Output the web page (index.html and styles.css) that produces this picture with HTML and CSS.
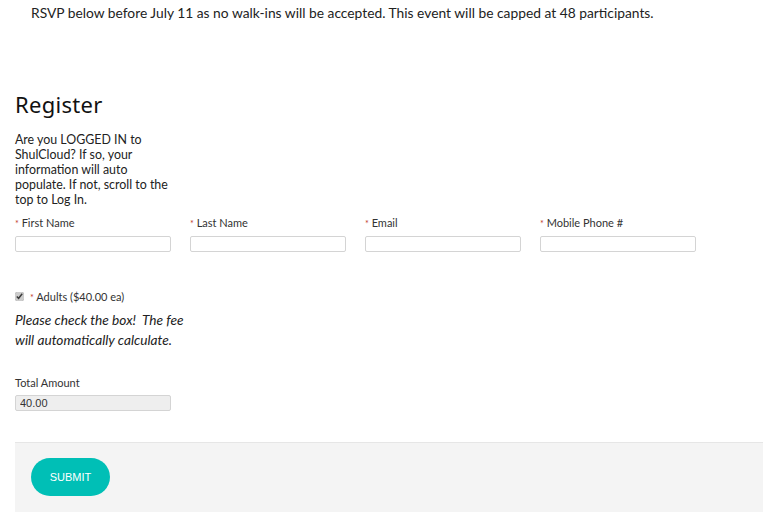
FILE: index.html
```html
<!DOCTYPE html>
<html>
<head>
  <meta charset="utf-8">
  <title>Register</title>
  <link rel="stylesheet" href="styles.css">
</head>
<body>
  <p class="intro">RSVP below before July 11 as no walk-ins will be accepted. This event will be capped at 48 participants.</p>

  <form class="reg-form">
    <h2 class="reg-title">Register</h2>
    <p class="reg-note">Are you LOGGED IN to ShulCloud? If so, your information will auto populate. If not, scroll to the top to Log In.</p>

    <div class="field-row">
      <div class="field">
        <label><span class="req">*</span> First Name</label>
        <input type="text" name="first_name">
      </div>
      <div class="field">
        <label><span class="req">*</span> Last Name</label>
        <input type="text" name="last_name">
      </div>
      <div class="field">
        <label><span class="req">*</span> Email</label>
        <input type="text" name="email">
      </div>
      <div class="field">
        <label><span class="req">*</span> Mobile Phone #</label>
        <input type="text" name="phone">
      </div>
    </div>

    <div class="check-row">
      <input type="checkbox" id="adults" checked>
      <label for="adults"><span class="req">*</span> Adults ($40.00 ea)</label>
    </div>
    <p class="check-note">Please check the box!&nbsp; The fee will automatically calculate.</p>

    <div class="field total">
      <label>Total Amount</label>
      <input type="text" value="40.00" readonly>
    </div>

    <div class="form-footer">
      <button type="submit">SUBMIT</button>
    </div>
  </form>
</body>
</html>
```

FILE: styles.css
```css
body {
  font-family: Lato, "Liberation Sans", sans-serif;
  color: #222;
  margin: 0;
  padding: 0 9px 0 15px;
}

.intro {
  font-size: 13.8px;
  line-height: 20px;
  margin: 3px 0 0 16px;
  color: #222;
}

.reg-title {
  font-family: "Noto Sans", "Open Sans", sans-serif;
  font-weight: 400;
  font-size: 22px;
  letter-spacing: 0.3px;
  color: #111;
  margin: 66px 0 0;
  line-height: 30px;
}

.reg-note {
  font-size: 12.4px;
  line-height: 15px;
  width: 158px;
  margin: 13px 0 0;
}

.field-row {
  display: flex;
  gap: 19px;
  margin-top: 9px;
}

.field {
  width: 156px;
}

.field label {
  display: block;
  font-size: 11px;
  line-height: 14px;
  color: #333;
  margin-bottom: 5px;
}

.req {
  color: #c0392b;
  font-size: 9px;
}

.field input {
  display: block;
  box-sizing: border-box;
  width: 156px;
  height: 16px;
  border: 1px solid #d4d4d4;
  border-radius: 2px;
  padding: 0 4px;
  font-family: "Liberation Sans", Arial, sans-serif;
  font-size: 11px;
  background: #fff;
}

.check-row {
  display: flex;
  align-items: center;
  margin-top: 38px;
  font-size: 11px;
  color: #333;
}

.check-row input {
  width: 9px;
  height: 9px;
  margin: 0 6px 0 0;
  accent-color: #ccc;
}

.check-note {
  font-style: italic;
  font-size: 13.7px;
  line-height: 20px;
  width: 175px;
  margin: 7px 0 0;
  color: #222;
}

.total {
  margin-top: 26px;
}

.total input {
  background: #eee;
  color: #333;
}

.form-footer {
  margin-top: 31px;
  background: #f4f4f4;
  border-top: 1px solid #e6e6e6;
  padding: 15px 16px 16px;
}

.form-footer button {
  width: 79px;
  height: 38px;
  border: none;
  border-radius: 19px;
  background: #00bfb6;
  color: #fff;
  font-family: "Liberation Sans", Arial, sans-serif;
  font-size: 11px;
  cursor: pointer;
}
```
